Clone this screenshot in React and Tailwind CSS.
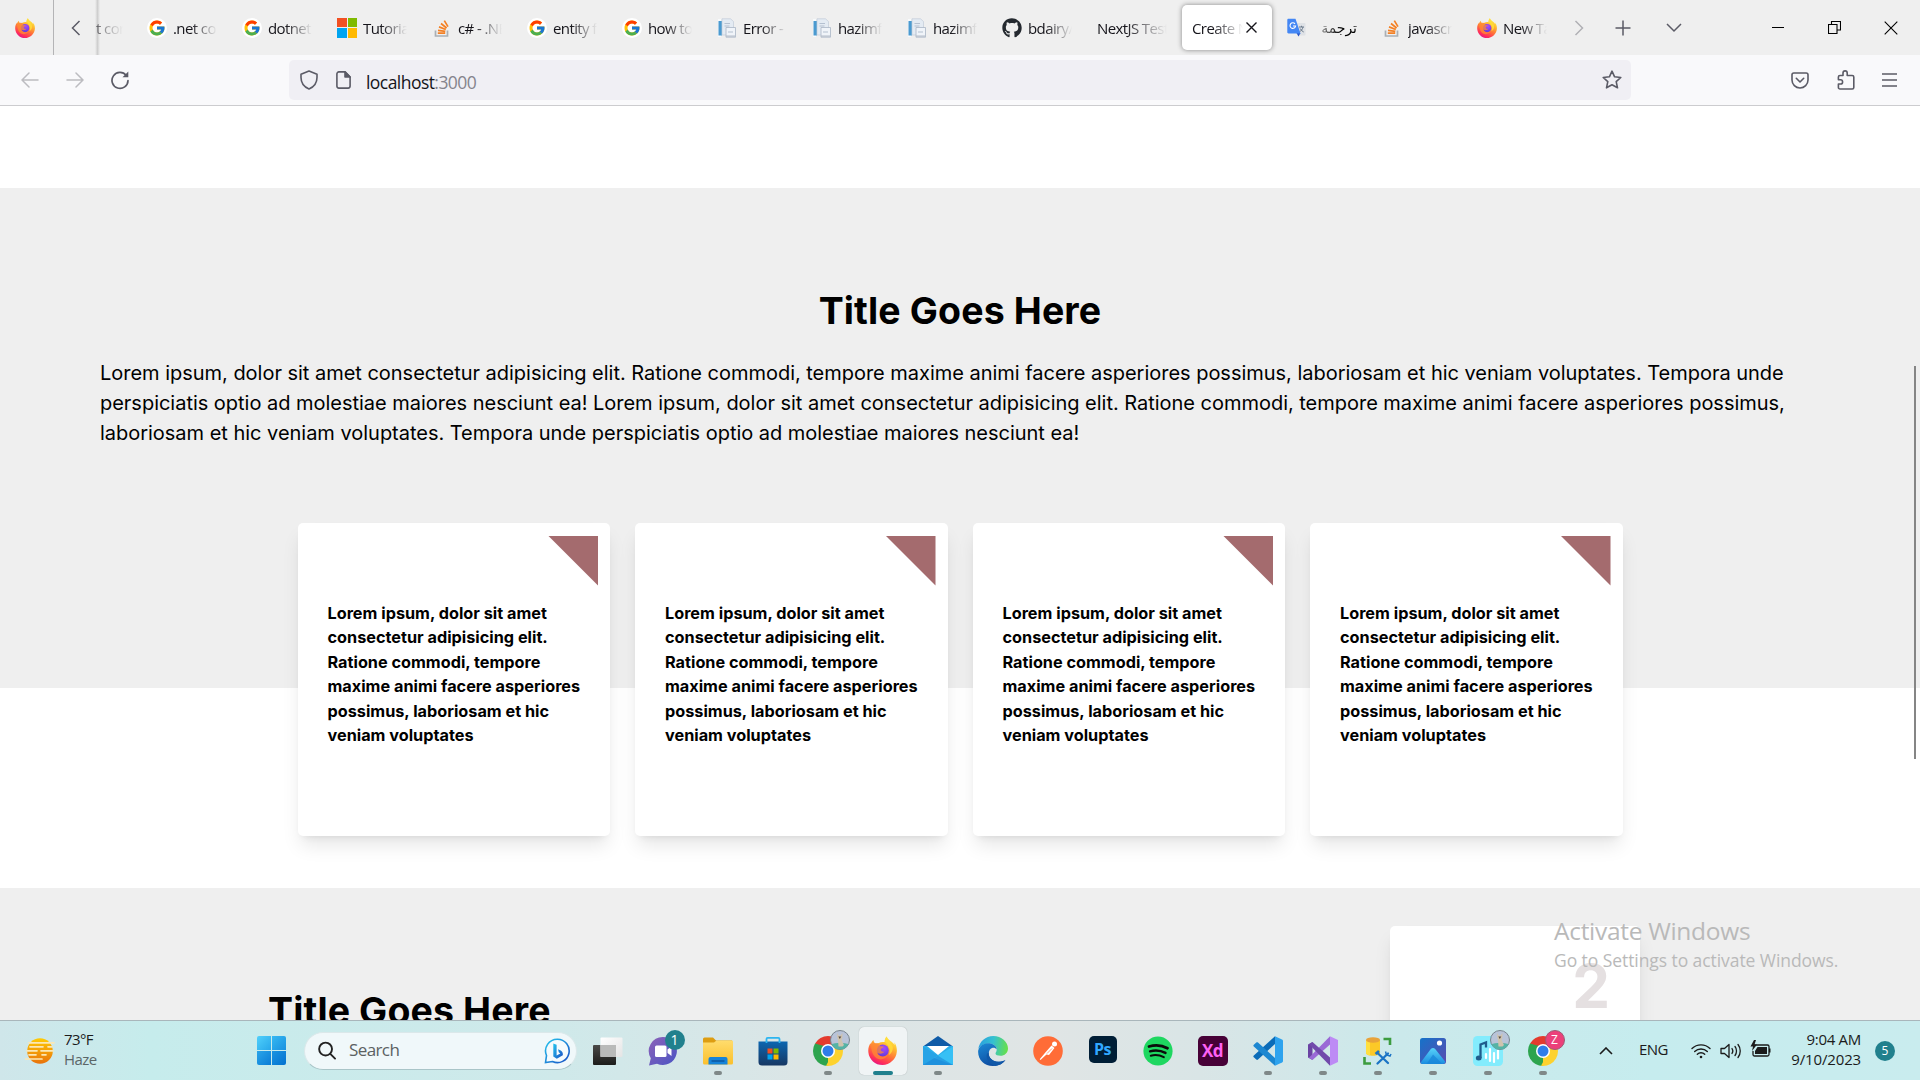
import React from "react";
import { FcGoogle } from "react-icons/fc";
import { FaGithub } from "react-icons/fa";

const UI = "font-['Open_Sans','Noto_Sans',sans-serif]";

/* ---------- logos ---------- */

function FirefoxLogo({ size = 20, id }) {
  return (
    <svg width={size} height={size} viewBox="0 0 32 32">
      <defs>
        <linearGradient id={id + "a"} x1="0.8" y1="0" x2="0.3" y2="1">
          <stop offset="0" stopColor="#fff44f" />
          <stop offset="0.3" stopColor="#ffbd2f" />
          <stop offset="0.6" stopColor="#ff7139" />
          <stop offset="0.85" stopColor="#ff2e5a" />
          <stop offset="1" stopColor="#e31587" />
        </linearGradient>
        <radialGradient id={id + "b"} cx="0.6" cy="0.3" r="0.8">
          <stop offset="0" stopColor="#a54bff" />
          <stop offset="1" stopColor="#5a38d6" />
        </radialGradient>
      </defs>
      <path
        d="M20.5 0.5c-1.500 2-2.300 4-2 6.200-2.500-.5-4.800 0-6.500 1L8.500 8.500C7 7.600 6.300 6 6 4.300 4.500 5.600 3.500 7.300 3 9.200L2.800 7.600C.9 10.500 0 14 .4 17.800 1.200 25.800 8 32 16 32s15.200-6.300 15.800-14.500c.3-4-.7-7.600-2.800-10.500.3 1 .4 2 .4 3C27 6 22.500 4.800 20.500.5z"
        fill={`url(#${id}a)`}
      />
      <circle cx="16.300" cy="16" r="6.600" fill={`url(#${id}b)`} />
      <path
        d="M3.500 10.500c2-2.800 5-3.300 8-2.200l1.500 2.800c1.200.5 3 .4 4.500.6-.3 1.500-2.800 2-3.400 3-.3 2 1.800 3.300 4 2.500-1.500 2.500-5 3.200-8 1.200 1.800 4.600 8 6 11.700 2.100-3 7.500-12.500 6.500-15.800.5-1.800-3.300-2.500-7-2.500-10.500z"
        fill="#ff8a34"
        opacity="0.75"
      />
      <path d="M20.500.5c-1.500 2-2.300 4-2 6.200 2.500 2.300 4.500 4.800 5.300 8 .4 3-.3 5-1 6.500 3.500-2 5-5.500 4.500-9C26.300 8 22 5.200 20.500.5z" fill="#ffdf3c" opacity="0.8" />
    </svg>
  );
}

function StackIcon() {
  return (
    <svg width="20" height="20" viewBox="0 0 20 20" fill="none">
      <path d="M3.500 12.500v5.500h12v-5.500" stroke="#aab0b5" strokeWidth="1.700" />
      <path d="M5.800 15.200h7.400M6 12.300l7.300 1.100M7 8.900l6.800 2.600M9 5.500l5.600 4.500M12.300 2.600l3.700 6" stroke="#f48024" strokeWidth="1.700" />
    </svg>
  );
}

function MicrosoftIcon() {
  return (
    <span className="grid h-5 w-5 grid-cols-2 gap-px">
      <span className="bg-[#f25022]" />
      <span className="bg-[#7fba00]" />
      <span className="bg-[#00a4ef]" />
      <span className="bg-[#ffb900]" />
    </span>
  );
}

function ServerIcon() {
  return (
    <svg width="20" height="20" viewBox="0 0 20 20">
      <path d="M1 1h3v18H1z" fill="#f7fafc" />
      <path d="M1.500 3h3.500v14.500H1.500z" fill="#4a9ad0" />
      <path d="M5 .8h8.500l3 2.700V17H5z" fill="#e4ebf3" stroke="#c3ccd8" strokeWidth="0.700" />
      <path d="M9 9.500h9.500v9.700H9z" fill="#f0f4f9" stroke="#aab5c5" strokeWidth="0.800" />
      <path d="M7.500 5.500h5.500M7.500 8h5M11 14h5" stroke="#b4c0d0" strokeWidth="1.200" />
      <path d="M9 17.500h9v1.200H9z" fill="#b5bdc9" />
    </svg>
  );
}

function TranslateIcon() {
  return (
    <svg width="20" height="20" viewBox="0 0 20 20">
      <path d="M8 5h9.500c.6 0 1 .5 1 1v10.500c0 .6-.4 1-1 1H11z" fill="#dfe2e6" />
      <path d="M12 9h5M14.500 7.800V9M16 9c-.5 2.300-2 4-3.500 5M13.200 10.500c.7 1.500 2 2.800 3.500 3.500" stroke="#6b7a8c" strokeWidth="1" fill="none" />
      <path d="M9.500 15h4l-2 3.500z" fill="#2a56c6" />
      <path d="M1.500.8h7L13.500 15.500H1.500c-.7 0-1.200-.5-1.200-1.200V2c0-.7.500-1.200 1.200-1.200z" fill="#4487f4" />
      <path d="M8 5.800A2.800 2.800 0 1 0 8.600 8H6" stroke="#fff" strokeWidth="1.100" fill="none" />
    </svg>
  );
}

function GoogleIcon() {
  return (
    <span className="flex h-5 w-5 items-center justify-center rounded-full bg-white">
      <FcGoogle size={18} />
    </span>
  );
}

function ChromeLogo() {
  return (
    <svg width="30" height="30" viewBox="0 0 30 30">
      <path d="M15 15 2.010 7.500A15 15 0 0 1 27.990 7.500z" fill="#e33b2e" />
      <path d="M15 15 27.990 7.500A15 15 0 0 1 15 30z" fill="#fdd22e" />
      <path d="M15 15V30A15 15 0 0 1 2.010 7.500z" fill="#2da44e" />
      <path d="M15 8h13.200l-.2-.5L15 7.500z" fill="#e33b2e" />
      <path d="M21.200 18.500 15 30l-2-.2 5-9z" fill="#fdd22e" />
      <path d="M2 7.500l6.600 11.300L15 22l-4-12z" fill="#2da44e" />
      <circle cx="15" cy="15" r="7" fill="#fff" />
      <circle cx="15" cy="15" r="5.500" fill="#2f7de9" />
    </svg>
  );
}

function Avatar() {
  return (
    <svg width="20" height="20" viewBox="0 0 20 20">
      <circle cx="10" cy="10" r="9.500" fill="#b8c3d8" stroke="#77838c" />
      <path d="M1.500 14c3-1.500 14-1.500 17 0A9.300 9.300 0 0 1 1.500 14z" fill="#55b3a5" />
      <path d="M7 3l1.500 2.500h2L12.500 3l-.2 5-.8 2 2.500 5-1.500 1.500H8.500l-.3-3.500L8 10 7.300 8z" fill="#cfc3ae" />
      <path d="M8.300 6.500l1.500 2.500 1.500-2.500z" fill="#544c45" />
    </svg>
  );
}

/* ---------- browser window ---------- */

const tabs = [
  { icon: <GoogleIcon />, text: ".net core" },
  { icon: <GoogleIcon />, text: "dotnet c" },
  { icon: <MicrosoftIcon />, text: "Tutorial:" },
  { icon: <StackIcon />, text: "c# - .NET" },
  { icon: <GoogleIcon />, text: "entity fra" },
  { icon: <GoogleIcon />, text: "how to c" },
  { icon: <ServerIcon />, text: "Error - h" },
  { icon: <ServerIcon />, text: "hazimfa" },
  { icon: <ServerIcon />, text: "hazimfa" },
  { icon: <FaGithub size={20} color="#24292f" />, text: "bdairy/c" },
  { icon: null, text: "NextJS Test" },
  { icon: null, text: "Create N", active: true },
  { icon: <TranslateIcon />, text: "ترجمة", rtl: true },
  { icon: <StackIcon />, text: "javascrip" },
  { icon: <FirefoxLogo size={20} id="fft" />, text: "New Tab" },
];

function Tab({ icon, text, active, rtl }) {
  return (
    <div
      className={
        "flex h-[45px] w-[90px] shrink-0 items-center gap-[6px] px-[10px] " +
        (active ? "rounded-[5px] bg-white shadow-[0_0_5px_rgba(0,0,0,0.45)]" : "")
      }
    >
      {icon && <span className="shrink-0">{icon}</span>}
      {rtl ? (
        <span dir="rtl" className="flex-1 overflow-hidden text-[14px] leading-5 whitespace-nowrap font-['DejaVu_Sans',sans-serif] [mask-image:linear-gradient(to_left,black_35%,rgba(0,0,0,0.25))]">
          {text}
        </span>
      ) : (
        <span className="min-w-0 flex-1 overflow-hidden pt-px text-[15px] leading-5 tracking-[-0.6px] whitespace-nowrap text-[#15141a] [mask-image:linear-gradient(to_right,black_40%,transparent)]">
          {text}
        </span>
      )}
      {active && (
        <svg width="11" height="11" viewBox="0 0 11 11" className="-ml-[3px] mr-[5px] shrink-0" stroke="#15141a" strokeWidth="1.400">
          <path d="M.5.5l10 10M10.500.5l-10 10" />
        </svg>
      )}
    </div>
  );
}

function TabBar() {
  return (
    <div className="flex h-[55px] shrink-0 items-center bg-[#efefef]">
      <div className="flex h-full w-[54px] items-center border-r border-[#b4b4b6] pl-[15px]">
        <FirefoxLogo size={20} id="ffp" />
      </div>
      <svg width="10" height="16" viewBox="0 0 10 16" className="ml-[17px]" fill="none" stroke="#5b5b66" strokeWidth="1.500">
        <path d="M8.500 1 1.500 8l7 7" />
      </svg>
      <div className="ml-[14px] h-full w-[5px] bg-[linear-gradient(to_right,#efefef,#cfcfcf,#efefef)]" />
      <div className="-ml-[4px] w-[32px] overflow-hidden pt-px text-[15px] leading-5 tracking-[-0.6px] whitespace-nowrap text-[#15141a] [mask-image:linear-gradient(to_right,rgba(0,0,0,0.6),transparent_85%)]">
        t core
      </div>
      <div className="ml-[9px] flex gap-[5px]">
        {tabs.map((t, i) => (
          <Tab key={i} {...t} />
        ))}
      </div>
      <svg width="10" height="16" viewBox="0 0 10 16" className="ml-[17px]" fill="none" stroke="#b0b0b5" strokeWidth="1.500">
        <path d="M1.500 1l7 7-7 7" />
      </svg>
      <svg width="16" height="16" viewBox="0 0 16 16" className="ml-[31px]" stroke="#5b5b66" strokeWidth="1.500">
        <path d="M8 .5v15M.5 8h15" />
      </svg>
      <svg width="16" height="10" viewBox="0 0 16 10" className="ml-[35px]" fill="none" stroke="#5b5b66" strokeWidth="1.500">
        <path d="M1 1l7 7 7-7" />
      </svg>
      <svg width="12" height="12" viewBox="0 0 12 12" className="ml-[90px]" stroke="#000">
        <path d="M0 5.500h12" />
      </svg>
      <svg width="13" height="13" viewBox="0 0 13 13" className="ml-[44px]" fill="none" stroke="#000" strokeWidth="1.100">
        <path d="M.5 3.500h8.500v9H.5zM3.500 3.500v-3h9v8.500H9" />
      </svg>
      <svg width="14" height="14" viewBox="0 0 14 14" className="ml-[43px]" stroke="#000" strokeWidth="1.100">
        <path d="M.7.7l12.600 12.600M13.300.7.7 13.300" />
      </svg>
    </div>
  );
}

function NavBar() {
  return (
    <div className="flex h-[51px] shrink-0 items-center border-b border-[#cccccf] bg-[#f9f9fb] pl-[21px]">
      <svg width="18" height="16" viewBox="0 0 18 16" fill="none" stroke="#bcbcc0" strokeWidth="1.500" strokeLinecap="round">
        <path d="M17 8H1M8 1 1 8l7 7" />
      </svg>
      <svg width="18" height="16" viewBox="0 0 18 16" className="ml-[27px]" fill="none" stroke="#bcbcc0" strokeWidth="1.500" strokeLinecap="round">
        <path d="M1 8h16M10 1l7 7-7 7" />
      </svg>
      <svg width="20" height="20" viewBox="0 0 20 20" className="ml-[26px]" fill="none" stroke="#5b5b66" strokeWidth="1.700" strokeLinecap="round">
        <path d="M16.300 5.500A8 8 0 1 0 18 10.500" />
        <path d="M18.300 1.500v5.800h-5.800z" fill="#5b5b66" stroke="none" />
      </svg>
      <div className="ml-[159px] flex h-10 w-[1342px] items-center rounded-[5px] bg-[#f0eff4] pr-[9px] pl-[11px]">
        <svg width="18" height="20" viewBox="0 0 18 20" fill="none" stroke="#5b5b66" strokeWidth="1.600" strokeLinejoin="round">
          <path d="M9 1l8 3.200v3.300c0 5-3.300 9.500-8 11.500-4.700-2-8-6.500-8-11.500V4.200z" />
        </svg>
        <svg width="15" height="18" viewBox="0 0 15 18" className="ml-[18px]" fill="none" stroke="#5b5b66" strokeWidth="1.600" strokeLinejoin="round">
          <path d="M9 .9H2.900a2 2 0 0 0-2 2v12.200a2 2 0 0 0 2 2h9.200a2 2 0 0 0 2-2V6z" />
          <path d="M9 .9V6h5.100z" fill="#5b5b66" />
        </svg>
        <span className="ml-[15px] flex-1 pt-[3px] text-[17.5px] leading-6 tracking-[-0.55px] text-[#15141a]">
          localhost<span className="text-[#85848c]">:3000</span>
        </span>
        <svg width="20" height="20" viewBox="0 0 20 20" fill="none" stroke="#5b5b66" strokeWidth="1.600" strokeLinejoin="round">
          <path d="M10 1.200l2.600 5.600 6.200.7-4.600 4.200 1.300 6.100L10 14.800l-5.500 3 1.300-6.100L1.200 7.500l6.200-.7z" />
        </svg>
      </div>
      <svg width="18" height="17" viewBox="0 0 18 17" className="ml-[160px]" fill="none" stroke="#5b5b66" strokeWidth="1.600" strokeLinecap="round" strokeLinejoin="round">
        <path d="M2.800 1h12.400C16.200 1 17 1.700 17 2.700V8a8 8 0 0 1-16 0V2.700C1 1.700 1.800 1 2.800 1z" />
        <path d="M5.300 6.300 9 10l3.700-3.700" />
      </svg>
      <svg width="18" height="20" viewBox="0 0 18 20" className="ml-[28px]" fill="none" stroke="#5b5b66" strokeWidth="1.600" strokeLinejoin="round">
        <path d="M6 5.500V3a2.100 2.100 0 0 1 4.200 0v2.500h5c.9 0 1.600.7 1.600 1.600V17.400c0 .9-.7 1.600-1.600 1.600H3c-.9 0-1.600-.7-1.600-1.600V14H3.500a2.100 2.100 0 0 0 0-4.200H1.400V7.100c0-.9.700-1.600 1.600-1.600z" />
      </svg>
      <svg width="15" height="14" viewBox="0 0 15 14" className="ml-[27px]" stroke="#5b5b66" strokeWidth="1.500">
        <path d="M0 1h15M0 7h15M0 13h15" />
      </svg>
    </div>
  );
}

/* ---------- page ---------- */

const LOREM =
  "Lorem ipsum, dolor sit amet consectetur adipisicing elit. Ratione commodi, tempore maxime animi facere asperiores possimus, laboriosam et hic veniam voluptates. Tempora unde perspiciatis optio ad molestiae maiores nesciunt ea!";

const INTRO = `${LOREM} ${LOREM}`;

function Card() {
  return (
    <div className="relative h-[312.5px] w-[312.5px] rounded-[5px] bg-white pt-[78px] pr-[20px] pl-[30px] shadow-[0_12.5px_18.75px_-3.75px_rgba(0,0,0,0.1),0_5px_7.5px_-5px_rgba(0,0,0,0.1)]">
      <div className="absolute top-[12.5px] right-[12px] h-[50px] w-[50px] bg-[#a46b6e] [clip-path:polygon(0_0,100%_0,100%_100%)]" />
      <p className="text-[16.25px] leading-[24.4px] font-bold">
        Lorem ipsum, dolor sit amet consectetur adipisicing elit. Ratione commodi, tempore maxime animi facere asperiores possimus, laboriosam et hic veniam voluptates
      </p>
    </div>
  );
}

function Page() {
  return (
    <main className="relative min-h-0 flex-1 overflow-hidden bg-white pt-[82px] font-['Inter',sans-serif] text-black">
      <section className="h-[500px] bg-[#efefef] px-[100px] pt-[100px]">
        <h2 className="text-center text-[37.5px] leading-[45px] font-bold tracking-[0.12px]">Title Goes Here</h2>
        <p className="mt-[25px] text-[20px] leading-[30px] tracking-[-0.022px]">{INTRO}</p>
        <div className="mt-[75px] flex justify-center gap-[25px]">
          <Card />
          <Card />
          <Card />
          <Card />
        </div>
      </section>
      <section className="mt-[200px] flex h-[400px] justify-between bg-[#efefef] pt-[38px] pr-[280px] pl-[268px]">
        <h2 className="pt-[62px] text-[37.5px] leading-[45px] font-bold tracking-[0.12px]">Title Goes Here</h2>
        <div className="flex h-[250px] w-[250px] justify-end rounded-[5px] bg-white pt-[23px] pr-[30px] shadow-[0_12.5px_18.75px_-3.75px_rgba(0,0,0,0.1),0_5px_7.5px_-5px_rgba(0,0,0,0.1)]">
          <span className="text-[60px] leading-[75px] font-bold text-[#e5e0e1]">2</span>
        </div>
      </section>
      <div className="absolute top-[260px] right-[4px] h-[393px] w-[2px] bg-[#858585]" />
      <div className={"absolute top-[808px] left-[1554px] text-[#b9b9b9] " + UI}>
        <div className="text-[24.5px] leading-[34px] tracking-[-0.3px] whitespace-nowrap">Activate Windows</div>
        <div className="text-[17.5px] leading-[24px] tracking-[-0.07px] whitespace-nowrap">Go to Settings to activate Windows.</div>
      </div>
    </main>
  );
}

/* ---------- taskbar ---------- */

function TaskView() {
  return (
    <svg width="30" height="30" viewBox="0 0 30 30">
      <defs>
        <linearGradient id="tv1" x1="0" y1="0" x2="0" y2="1"><stop offset="0" stopColor="#4a4a48" /><stop offset="1" stopColor="#1c1c1a" /></linearGradient>
        <linearGradient id="tv2" x1="0" y1="0" x2="1" y2="1"><stop offset="0" stopColor="#fff" /><stop offset="1" stopColor="#e4e4e4" /></linearGradient>
      </defs>
      <rect x="0" y="9" width="23" height="20" rx="1" fill="url(#tv1)" />
      <rect x="7.500" y="1.500" width="22" height="19.500" rx="1" fill="url(#tv2)" />
      <rect x="7.500" y="9" width="15.500" height="12" fill="#b9bab9" />
    </svg>
  );
}

function Chat() {
  return (
    <svg width="30" height="30" viewBox="0 0 30 30">
      <defs>
        <linearGradient id="ch" x1="0" y1="0" x2="1" y2="1"><stop offset="0" stopColor="#8d62b8" /><stop offset="1" stopColor="#4a54c4" /></linearGradient>
      </defs>
      <path d="M15 1a14 14 0 1 1-6 26.700L1 29.500l1.800-7.300A14 14 0 0 1 15 1z" fill="url(#ch)" />
      <rect x="7" y="9.500" width="11.500" height="11.500" rx="1.500" fill="#fff" />
      <path d="M19.500 13.500l4-3v9.500l-4-3z" fill="#fff" />
    </svg>
  );
}

function Folder() {
  return (
    <svg width="30" height="28" viewBox="0 0 30 28">
      <defs>
        <linearGradient id="fo" x1="0" y1="0" x2="0" y2="1"><stop offset="0" stopColor="#ffdc6d" /><stop offset="1" stopColor="#fbc02d" /></linearGradient>
      </defs>
      <path d="M0 2a1.500 1.500 0 0 1 1.500-1.500H10l3 3H29v8H0z" fill="#dd9d12" />
      <path d="M0 5.500h11l2.500-2H29a1 1 0 0 1 1 1V26a1.500 1.500 0 0 1-1.500 1.500h-27A1.500 1.500 0 0 1 0 26z" fill="url(#fo)" />
      <path d="M5.500 27.500v-5.500a2 2 0 0 1 2-2h15a2 2 0 0 1 2 2v5.500z" fill="#1683d8" />
      <path d="M9 24h12" stroke="#0c58a0" strokeWidth="1.300" strokeLinecap="round" />
    </svg>
  );
}

function Store() {
  return (
    <svg width="30" height="30" viewBox="0 0 30 30">
      <defs>
        <linearGradient id="st" x1="0" y1="0" x2="0" y2="1"><stop offset="0" stopColor="#0c66b0" /><stop offset="1" stopColor="#173763" /></linearGradient>
      </defs>
      <path d="M.5 5.500h29V26a3.500 3.500 0 0 1-3.500 3.500H4A3.500 3.500 0 0 1 .5 26z" fill="url(#st)" />
      <path d="M8.500 7V3a1.200 1.200 0 0 1 1.200-1.200h10.600A1.200 1.200 0 0 1 21.500 3v4" fill="none" stroke="#2cb5f0" strokeWidth="1.800" />
      <path d="M9.500 12.500h5v5h-5z" fill="#f25022" />
      <path d="M15.500 12.500h5v5h-5z" fill="#7fba00" />
      <path d="M9.500 18.500h5v5h-5z" fill="#00a4ef" />
      <path d="M15.500 18.500h5v5h-5z" fill="#ffb900" />
    </svg>
  );
}

function Mail() {
  return (
    <svg width="30" height="29" viewBox="0 0 30 29">
      <path d="M15 0l15 10.500H0z" fill="#0f5ba7" />
      <path d="M0 10h30v19H0z" fill="#2aaeea" />
      <path d="M4 10h22l-11 9z" fill="#fff" />
      <path d="M0 10.500 30 29H0z" fill="#27a3e6" />
      <path d="M30 10.500 11 22l19 7z" fill="#37c0f5" />
      <path d="M15 19.700 30 29H0z" fill="#1a84d6" opacity="0.55" />
    </svg>
  );
}

function Edge() {
  return (
    <svg width="30" height="30" viewBox="0 0 30 30">
      <defs>
        <linearGradient id="ed1" x1="0" y1="0.300" x2="1" y2="0.400"><stop offset="0" stopColor="#2a9fe0" /><stop offset="0.500" stopColor="#35c1d0" /><stop offset="1" stopColor="#66e04b" /></linearGradient>
        <linearGradient id="ed2" x1="0" y1="0" x2="0.500" y2="1"><stop offset="0" stopColor="#1c8ad6" /><stop offset="1" stopColor="#0d4ba0" /></linearGradient>
      </defs>
      <path d="M.3 13C1.500 5.500 7.500 0 15.300 0 23.500 0 30 6 30 12.500c0 4.500-3.500 7.300-7.500 7.300-3 0-5-1-5-2.300 0-1 1.200-1.500 1.200-4C18.700 10 15 7.500 11 7.500 6 7.500 2 10 .3 13z" fill="url(#ed1)" />
      <path d="M.2 14.500C1.500 9.500 6 7.300 10.500 7.300c4 0 8 2.400 8.200 6-1-1.300-2.500-1.800-4-1.500-2.500.6-4 3-4 6 0 6 7 9.500 13.500 7.500 1.500-.5 2.800-1 3.500-1.500C25 28 20.500 30 15 30 6 30-.6 23 .2 14.500z" fill="url(#ed2)" />
      <path d="M10.700 16.500c-.3 7 7 11.500 16 8-2 3-5.500 5-9.500 5.500-5-1-9-6-8.500-11 .2-1 .8-2 2-2.500z" fill="#1058a8" />
    </svg>
  );
}

function Postman() {
  return (
    <svg width="30" height="30" viewBox="0 0 30 30">
      <circle cx="15" cy="15" r="14.800" fill="#ff6c37" />
      <circle cx="21.500" cy="8" r="2.500" fill="#fff" />
      <path d="M18.500 9.500l3 2.500-5.500 7-2.500-.5-6 5.500-.8-.8 5-6z" fill="#fff" />
      <path d="M19 12.500l-5 5" stroke="#ff6c37" strokeWidth="0.700" />
    </svg>
  );
}

function Spotify() {
  return (
    <svg width="30" height="30" viewBox="0 0 30 30" fill="none" stroke="#0b0b0b" strokeLinecap="round">
      <circle cx="15" cy="15" r="14.600" fill="#1ed760" stroke="none" />
      <path d="M6 10.500c6.500-1.800 13-1.200 18.500 1.700" strokeWidth="2.800" />
      <path d="M7 15.300c5.300-1.400 10.800-.9 15.500 1.600" strokeWidth="2.400" />
      <path d="M7.800 19.700c4.500-1.100 9-.6 13 1.500" strokeWidth="2" />
    </svg>
  );
}

function AdobeTile({ label, cls }) {
  return <div className={"flex items-center justify-center rounded-[5px] font-['Open_Sans',sans-serif] font-bold tracking-[-0.5px] " + cls}>{label}</div>;
}

function VsCode() {
  return (
    <svg width="30" height="30" viewBox="0 0 30 30">
      <path d="M22 .3V8L5 23.500c-.5.5-1.200.5-1.700 0L.8 21.300c-.6-.5-.6-1.200 0-1.700z" fill="#0b6cb8" />
      <path d="M22 29.700V22L5 6.500c-.5-.5-1.200-.5-1.700 0L.8 8.700c-.6.500-.6 1.200 0 1.700z" fill="#1c87d1" />
      <path d="M22 .3l7 3.200c.6.300 1 .8 1 1.500v20c0 .7-.4 1.200-1 1.500l-7 3.200z" fill="#2ea3ee" />
    </svg>
  );
}

function VisualStudio() {
  return (
    <svg width="30" height="30" viewBox="0 0 30 30">
      <path d="M0 8.500 4.500 6v18L0 21.500z" fill="#6a43a3" />
      <path d="M22 .3V8.500L4.500 24 1 21.800z" fill="#9a69d6" />
      <path d="M22 29.700v-8.200L4.500 6 1 8.200z" fill="#714aab" />
      <path d="M22 .3 30 4v22l-8 3.700z" fill="#bd8bf5" />
    </svg>
  );
}

function SqlTools() {
  return (
    <svg width="30" height="30" viewBox="0 0 30 30">
      <path d="M3 4v13c0 1.500 3 2.700 7 2.700s7-1.200 7-2.700V4z" fill="#fcc927" />
      <path d="M3 4v13c0 1.500 2 2.300 4 2.600V6z" fill="#ffdf3f" />
      <ellipse cx="10" cy="4" rx="7" ry="2.700" fill="#e8a33a" />
      <path d="M20.500 3H27V9M1.500 21v6.500H8" fill="none" stroke="#3c9c3f" strokeWidth="2.600" />
      <path d="M14.500 17 25 27M25 17.500 14.500 27.500" stroke="#1b74c5" strokeWidth="2.300" strokeLinecap="round" />
      <path d="M22.500 15.500l1 3.500 3.500 1 1-2" fill="none" stroke="#1b74c5" strokeWidth="1.500" />
      <path d="M12.500 18l3.500-3" stroke="#1b74c5" strokeWidth="2.500" />
    </svg>
  );
}

function Photos() {
  return (
    <svg width="26" height="26" viewBox="0 0 26 26">
      <defs>
        <linearGradient id="ph" x1="0" y1="0" x2="1" y2="1"><stop offset="0" stopColor="#1573c9" /><stop offset="1" stopColor="#5b4ab0" /></linearGradient>
        <linearGradient id="ph2" x1="0" y1="0" x2="0" y2="1"><stop offset="0" stopColor="#58d3fa" /><stop offset="1" stopColor="#1b8de0" /></linearGradient>
      </defs>
      <rect width="26" height="26" rx="2.500" fill="url(#ph)" />
      <circle cx="19.500" cy="5" r="2.600" fill="#fff" />
      <path d="M.7 24.500 10.800 11c1.200-1.500 3.200-1.500 4.400 0L25.500 24c-.5 1.300-1.500 2-3 2h-19c-1.300 0-2.300-.5-2.800-1.500z" fill="url(#ph2)" />
      <path d="M13 16.500 22.500 26h-16z" fill="#1784d8" opacity="0.700" />
    </svg>
  );
}

function Music() {
  return (
    <svg width="30" height="30" viewBox="0 0 30 30">
      <rect width="30" height="30" rx="4.500" fill="#83ecfd" />
      <path d="M7.500 22V8.500l5.500-2v5" fill="none" stroke="#1f5d8d" strokeWidth="2.300" />
      <ellipse cx="5.700" cy="22" rx="2.900" ry="2.500" fill="#1f5d8d" />
      <path d="M13 18v4M17 13v12M21 17v9M25 14.500v8" stroke="#fff" strokeWidth="2.200" strokeLinecap="round" />
    </svg>
  );
}

const apps = [
  { icon: <TaskView /> },
  { icon: <Chat />, badge: <span className="flex h-5 w-5 items-center justify-center rounded-full bg-[#21808d] text-[14px] text-white">1</span> },
  { icon: <Folder />, run: true },
  { icon: <Store /> },
  { icon: <ChromeLogo />, run: true, badge: <Avatar /> },
  { icon: <FirefoxLogo size={29} id="ffx" />, active: true },
  { icon: <Mail />, run: true },
  { icon: <Edge /> },
  { icon: <Postman /> },
  { icon: <AdobeTile label="Ps" cls="-mt-[3px] h-[27px] w-[28px] bg-[#001e36] text-[16px] text-[#31a8ff]" /> },
  { icon: <Spotify /> },
  { icon: <AdobeTile label="Xd" cls="h-[30px] w-[30px] bg-[#470137] text-[17px] text-[#ff61f6]" /> },
  { icon: <VsCode />, run: true },
  { icon: <VisualStudio />, run: true },
  { icon: <SqlTools />, run: true },
  { icon: <Photos />, run: true },
  { icon: <Music />, run: true, badge: <Avatar /> },
  { icon: <ChromeLogo />, run: true, badge: <span className="flex h-5 w-5 items-center justify-center rounded-full border border-[#9d5c74] bg-[#ec407a] text-[12px] text-white">Z</span> },
];

function TaskbarApp({ icon, badge, run, active }) {
  return (
    <div className="flex w-[55px] justify-center">
      <div className={"relative flex h-12 w-12 items-center justify-center rounded-[5px] " + (active ? "bg-[#f0f4f5] shadow-[0_0_1px_rgba(0,0,0,0.3)]" : "")}>
        {icon}
        {badge && <div className="absolute top-[3px] right-[2px]">{badge}</div>}
        {run && <div className="absolute bottom-0 left-5 h-1 w-2 rounded-full bg-[#7f8888]" />}
        {active && <div className="absolute bottom-0 left-[14px] h-1 w-5 rounded-full bg-[#21808d]" />}
      </div>
    </div>
  );
}

function Taskbar() {
  return (
    <div className="flex h-[60px] shrink-0 items-center border-t border-[#a9b6bb] bg-[linear-gradient(to_right,#cfe6ea_0px,#c6ecec_150px,#cfe9ea_560px,#dbe5e6_800px,#e0e5e5_1050px,#d9e5e6_1200px,#cbe9eb_1400px,#c6ecee_1650px,#c9ecee_1920px)] text-[#1b1b1b]">
      <div className="flex w-[244px] items-center pl-[25px]">
        <svg width="30" height="28" viewBox="0 0 30 28">
          <defs>
            <linearGradient id="hz" x1="0" y1="0" x2="0" y2="1"><stop offset="0" stopColor="#ffcb05" /><stop offset="1" stopColor="#e8720c" /></linearGradient>
          </defs>
          <circle cx="15" cy="14" r="12.800" fill="url(#hz)" />
          <path d="M4 5.800h25M5 9.800h13M23 9.800h4M2 13.800h10M16 13.800h12M4 17.800h7M17 17.800h4M0 22h17" stroke="#fbe7b5" strokeWidth="1.700" strokeLinecap="round" />
        </svg>
        <div className="ml-[9px] pb-[4px] text-[15px] leading-5 tracking-[-0.6px]">
          <div>73°F</div>
          <div className="text-[#5b6667]">Haze</div>
        </div>
      </div>
      <div className="flex w-[55px] justify-center">
        <div className="grid h-[29px] w-[29px] grid-cols-2 gap-px">
          <span className="rounded-tl-[2px] bg-[linear-gradient(135deg,#50d0fb,#27a7ea)]" />
          <span className="rounded-tr-[2px] bg-[linear-gradient(135deg,#35b8f2,#1a91e0)]" />
          <span className="rounded-bl-[2px] bg-[linear-gradient(135deg,#2aa5e9,#0a7cd6)]" />
          <span className="rounded-br-[2px] bg-[linear-gradient(135deg,#1b94e1,#0372d0)]" />
        </div>
      </div>
      <div className="ml-[5px] flex h-[38px] w-[273px] items-center rounded-full border border-[#dbe8ea] border-b-[#a9c5c8] bg-[#f0f8fa] pr-[6px] pl-[13px]">
        <svg width="18" height="19" viewBox="0 0 19 19" fill="none" stroke="#222" strokeWidth="2" strokeLinecap="round">
          <circle cx="8" cy="8" r="6.800" />
          <path d="M13 13l5 5" />
        </svg>
        <span className="ml-[13px] flex-1 pb-px text-[17px] leading-6 tracking-[-0.6px] text-[#5b6162]">Search</span>
        <svg width="26" height="26" viewBox="0 0 26 26">
          <defs>
            <linearGradient id="bg" x1="0" y1="0" x2="1" y2="1"><stop offset="0" stopColor="#24c5ee" /><stop offset="1" stopColor="#1a4fc4" /></linearGradient>
          </defs>
          <path d="M13.500 1.200a11.700 11.700 0 1 1-5 22.300l-7 1 1-7A11.700 11.700 0 0 1 13.500 1.200z" fill="#f5fbfd" stroke="url(#bg)" strokeWidth="1.600" />
          <path d="M9.300 5.500v13l3.500 2.200 6-3.500c.6-3-1.500-5-4.800-6l.8 3 1.500 1.200-3.700 2V6.800z" fill="url(#bg)" />
        </svg>
      </div>
      <div className="ml-[3px] flex">
        {apps.map((a, i) => (
          <TaskbarApp key={i} {...a} />
        ))}
      </div>
      <svg width="14" height="8" viewBox="0 0 14 8" className="ml-[29px]" fill="none" stroke="#1b1b1b" strokeWidth="1.600">
        <path d="M1 7l6-6 6 6" />
      </svg>
      <span className="ml-[26px] w-[52px] pb-[3px] text-[15px] leading-5 tracking-[-0.6px]">ENG</span>
      <svg width="20" height="16" viewBox="0 0 20 16" fill="none" stroke="#1b1b1b" strokeWidth="1.400" strokeLinecap="round">
        <path d="M1 5.500a13 13 0 0 1 18 0M3.700 8.500a9 9 0 0 1 12.600 0M6.300 11.300a5.300 5.300 0 0 1 7.400 0" />
        <circle cx="10" cy="14" r="1.300" fill="#1b1b1b" stroke="none" />
      </svg>
      <svg width="22" height="18" viewBox="0 0 22 18" className="ml-[9px]" fill="none" stroke="#1b1b1b" strokeWidth="1.300" strokeLinecap="round" strokeLinejoin="round">
        <path d="M1 6.500h3.500L9 2.500v13l-4.500-4H1z" />
        <path d="M12 6.500c1 1.500 1 3.500 0 5M15 4.500c2 2.500 2 6.500 0 9M18 2.500c3 3.700 3 9.300 0 13" />
      </svg>
      <svg width="21" height="18" viewBox="0 0 21 18" className="-mt-[3px] ml-[8px]">
        <path d="M4 5h13.500a1.500 1.500 0 0 1 1.500 1.500v8a1.500 1.500 0 0 1-1.500 1.500h-13A1.500 1.500 0 0 1 3 14.500V11" fill="none" stroke="#1b1b1b" strokeWidth="1.300" />
        <path d="M7.500 7H17v7H5v-3z" fill="#1b1b1b" />
        <path d="M19 8.500h1.500v4H19z" fill="#1b1b1b" />
        <path d="M4 0 .5 6.500H3L2 11l5-6.500H4.500L6 0z" fill="#1b1b1b" />
      </svg>
      <div className="flex-1 pb-[4px] text-right text-[15px] leading-5 whitespace-nowrap">
        <div className="tracking-[-0.3px]">9:04 AM</div>
        <div className="tracking-[-0.15px]">9/10/2023</div>
      </div>
      <div className="mr-[25px] ml-[14px] flex h-5 w-5 items-center justify-center rounded-full bg-[#21808d] text-[12px] text-white">5</div>
    </div>
  );
}

export default function App() {
  return (
    <div className={"flex h-[1080px] w-[1920px] flex-col overflow-hidden bg-white " + UI}>
      <TabBar />
      <NavBar />
      <Page />
      <Taskbar />
    </div>
  );
}
